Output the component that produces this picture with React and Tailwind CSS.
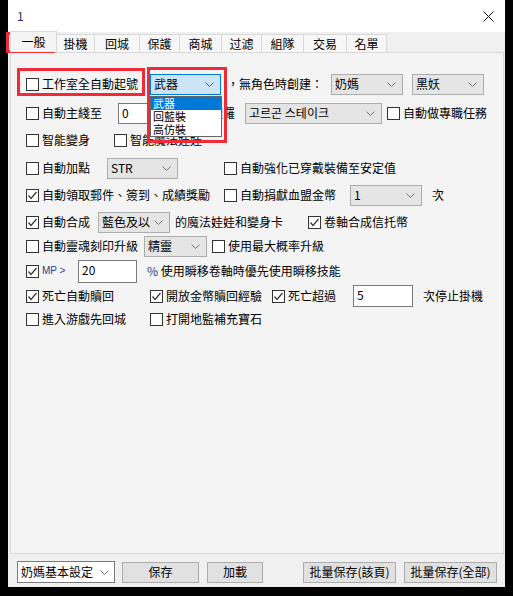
import React from "react";

const FONT = { fontFamily: '"Noto Sans CJK TC", "Noto Sans", sans-serif' };

function Chevron({ color = "#777" }) {
  return (
    <svg width="9" height="5" viewBox="0 0 9 5" className="shrink-0">
      <polyline points="0.5,0.5 4.5,4.5 8.5,0.5" fill="none" stroke={color} strokeWidth="1" />
    </svg>
  );
}

function Box({ checked }) {
  return (
    <span className="w-[13px] h-[13px] border border-[#333] bg-white shrink-0 flex items-center justify-center">
      {checked && (
        <svg width="11" height="11" viewBox="0 0 11 11">
          <polyline points="1.5,5.5 4,8.5 9.5,2" fill="none" stroke="#333" strokeWidth="1.2" />
        </svg>
      )}
    </span>
  );
}

function CB({ checked, children, className = "" }) {
  return (
    <div className={"flex items-center shrink-0 " + className}>
      <Box checked={checked} />
      <span className="ml-[3px] text-[12px] leading-[16px] whitespace-nowrap text-black">{children}</span>
    </div>
  );
}

function Sel({ text, className = "" }) {
  return (
    <div className={"h-[21px] bg-[#e5e5e5] border border-[#adadad] flex items-center justify-between pl-[3px] pr-[6px] shrink-0 " + className}>
      <span className="text-[12px] leading-[16px] whitespace-nowrap">{text}</span>
      <Chevron />
    </div>
  );
}

function Input({ text, className = "" }) {
  return (
    <div className={"bg-white border border-[#7a7a7a] flex items-start pl-[3px] pt-[1px] shrink-0 " + className}>
      <span className="text-[12px] leading-[16px]">{text}</span>
    </div>
  );
}

function Btn({ children, className = "" }) {
  return (
    <div className={"h-[21px] bg-[#e1e1e1] border border-[#adadad] flex items-center justify-center shrink-0 text-[12px] leading-[16px] whitespace-nowrap " + className}>
      {children}
    </div>
  );
}

const tabs = [
  ["掛機", 38],
  ["回城", 45],
  ["保護", 40],
  ["商城", 42],
  ["过滤", 40],
  ["組隊", 42],
  ["交易", 43],
  ["名單", 40],
];

export default function App() {
  return (
    <div className="w-[513px] h-[596px] bg-black relative overflow-hidden" style={FONT}>
      <div className="ml-[8px] w-[497px] h-[587px] bg-[#f0f0f0] flex flex-col">
        {/* title bar */}
        <div className="h-[32px] bg-white flex items-center justify-between pl-[9px] pr-[11px] shrink-0">
          <span className="text-[12px] text-[#1a2a5a] leading-[16px]">1</span>
          <svg width="11" height="11" viewBox="0 0 11 11">
            <line x1="0.5" y1="0.5" x2="10.5" y2="10.5" stroke="#111" strokeWidth="1" />
            <line x1="10.5" y1="0.5" x2="0.5" y2="10.5" stroke="#111" strokeWidth="1" />
          </svg>
        </div>
        {/* tabs */}
        <div className="h-[20px] flex items-end shrink-0 relative z-10">
          <div className="ml-[2px] w-[47px] h-[21px] bg-[#f4f4f4] border border-b-0 border-[#d9d9d9] flex items-center justify-center text-[12px] leading-[16px]">
            一般
          </div>
          {tabs.map(([t, w]) => (
            <div
              key={t}
              style={{ width: w }}
              className="h-[18px] bg-[#f7f7f7] border-t border-r border-[#d9d9d9] flex items-center justify-center text-[12px] leading-[16px]"
            >
              {t}
            </div>
          ))}
        </div>
        {/* panel */}
        <div className="ml-[2px] w-[494px] h-[502px] border border-[#d9d9d9] bg-[#f4f4f4] pl-[15px] pt-[20px] flex flex-col shrink-0">
          {/* row 1 */}
          <div className="h-[22px] flex items-center">
            <CB className="w-[124px]">工作室全自動起號</CB>
            <div className="w-[71px] h-[21px] bg-[#cce4f7] border border-[#0078d7] flex items-center justify-between pl-[3px] pr-[6px] shrink-0">
              <span className="text-[12px] leading-[16px]">武器</span>
              <Chevron color="#555" />
            </div>
            <span className="ml-[6px] w-[104px] text-[12px] leading-[16px] whitespace-nowrap">，無角色時創建：</span>
            <Sel text="奶媽" className="w-[72px]" />
            <Sel text="黑妖" className="ml-[9px] w-[72px]" />
          </div>
          {/* row 2 */}
          <div className="h-[22px] mt-[7px] flex items-center">
            <CB className="w-[92px]">自動主綫至</CB>
            <Input text="0" className="w-[47px] h-[21px]" />
            <span className="ml-[10px] w-[70px] text-[12px] leading-[16px] whitespace-nowrap text-right pr-[10px]">吃料理羅</span>
            <Sel text="고르곤 스테이크" className="w-[137px]" />
            <CB className="ml-[5px]">自動做專職任務</CB>
          </div>
          {/* row 3 */}
          <div className="h-[22px] mt-[5px] flex items-center">
            <CB className="w-[88px]">智能變身</CB>
            <CB>智能魔法娃娃</CB>
          </div>
          {/* row 4 */}
          <div className="h-[22px] mt-[6px] flex items-center">
            <CB className="w-[81px]">自動加點</CB>
            <Sel text="STR" className="w-[71px]" />
            <CB className="ml-[46px]">自動強化已穿戴裝備至安定值</CB>
          </div>
          {/* row 5 */}
          <div className="h-[22px] mt-[5px] flex items-center">
            <CB checked className="w-[198px]">自動領取郵件、簽到、成績獎勵</CB>
            <CB className="w-[126px]">自動捐獻血盟金幣</CB>
            <Sel text="1" className="w-[72px]" />
            <span className="ml-[10px] text-[12px] leading-[16px]">次</span>
          </div>
          {/* row 6 */}
          <div className="h-[22px] mt-[5px] flex items-center">
            <CB checked className="w-[72px]">自動合成</CB>
            <Sel text="藍色及以" className="w-[72px]" />
            <span className="ml-[5px] w-[133px] text-[12px] leading-[16px] whitespace-nowrap">的魔法娃娃和變身卡</span>
            <CB checked>卷軸合成信托幣</CB>
          </div>
          {/* row 7 */}
          <div className="h-[22px] mt-[2px] flex items-center">
            <CB className="w-[118px]">自動靈魂刻印升級</CB>
            <Sel text="精靈" className="w-[63px]" />
            <CB className="ml-[5px]">使用最大概率升級</CB>
          </div>
          {/* row 8 */}
          <div className="h-[22px] mt-[3px] flex items-center">
            <div className="w-[52px] flex items-center shrink-0">
              <Box checked />
              <span className="ml-[3px] text-[10px] leading-[14px] text-[#2a3c8c]" style={{ fontFamily: '"Liberation Sans", sans-serif' }}>
                MP &gt;
              </span>
            </div>
            <Input text="20" className="w-[59px] h-[23px]" />
            <span className="ml-[10px] text-[12px] leading-[16px] whitespace-nowrap">
              <span className="text-[#2a3c8c]">%</span> 使用瞬移卷軸時優先使用瞬移技能
            </span>
          </div>
          {/* row 9 */}
          <div className="h-[22px] mt-[3px] flex items-center">
            <CB checked className="w-[124px]">死亡自動贖回</CB>
            <CB checked className="w-[122px]">開放金幣贖回經驗</CB>
            <CB checked className="w-[81px]">死亡超過</CB>
            <Input text="5" className="w-[60px] h-[22px]" />
            <span className="ml-[10px] text-[12px] leading-[16px] whitespace-nowrap">次停止掛機</span>
          </div>
          {/* row 10 */}
          <div className="h-[22px] mt-[1px] flex items-center">
            <CB className="w-[124px]">進入游戲先回城</CB>
            <CB>打開地監補充寶石</CB>
          </div>
        </div>
        {/* bottom bar */}
        <div className="mt-[7px] h-[22px] flex items-center shrink-0">
          <div className="ml-[9px] w-[98px] h-[22px] bg-white border border-[#7a7a7a] flex items-center justify-between pl-[3px] pr-[5px]">
            <span className="text-[12px] leading-[16px] whitespace-nowrap">奶媽基本設定</span>
            <Chevron />
          </div>
          <Btn className="ml-[7px] w-[77px]">保存</Btn>
          <Btn className="ml-[8px] w-[56px]">加載</Btn>
          <Btn className="ml-[40px] w-[93px]">批量保存(該頁)</Btn>
          <Btn className="ml-[8px] w-[93px]">批量保存(全部)</Btn>
        </div>
      </div>

      {/* open dropdown list overlay */}
      <div className="absolute left-[150px] top-[96px] w-[72px] h-[41px] bg-white border border-[#646464] flex flex-col">
        <div className="h-[13px] bg-[#0078d7] text-white text-[11px] leading-[13px] pl-[2px]">武器</div>
        <div className="h-[13px] text-[11px] leading-[13px] pl-[2px]">回藍裝</div>
        <div className="h-[13px] text-[11px] leading-[13px] pl-[2px]">高仿裝</div>
      </div>

      {/* red annotation boxes */}
      <div className="absolute left-[6px] top-[32px] w-[49px] h-[21px] border-[3px] border-[#ee2b36]" />
      <div className="absolute left-[17px] top-[68px] w-[128px] h-[28px] border-[3px] border-[#ee2b36]" />
      <div className="absolute left-[147px] top-[67px] w-[80px] h-[76px] border-[3px] border-[#ee2b36]" />
    </div>
  );
}
